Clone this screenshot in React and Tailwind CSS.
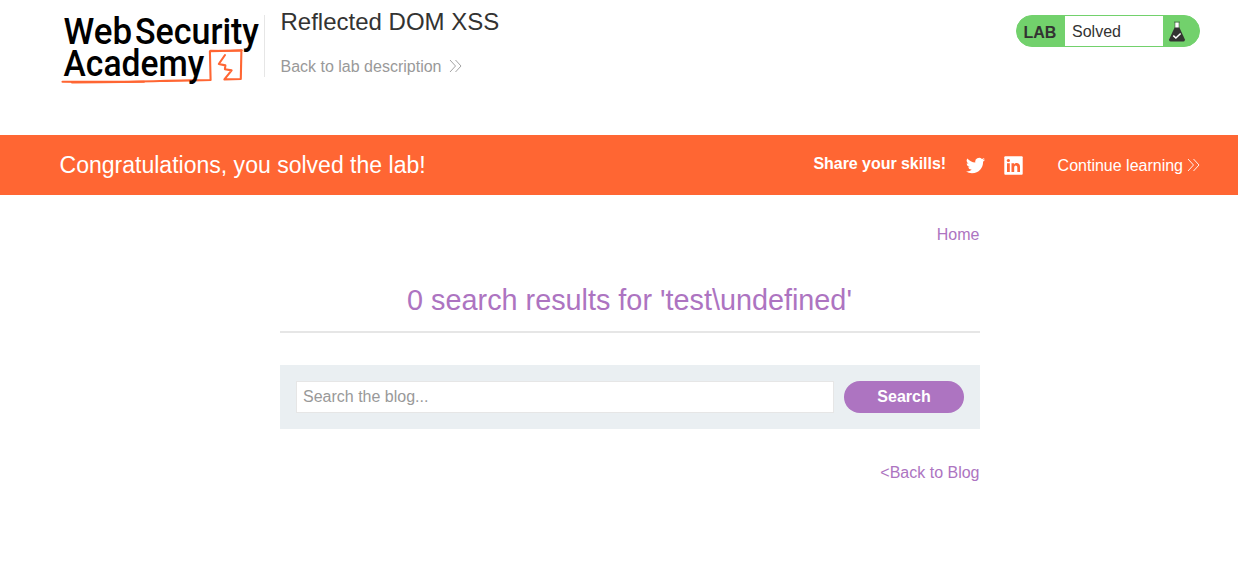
function Logo() {
  return (
    <svg width="204" height="90" viewBox="0 0 204 90" overflow="visible" className="block shrink-0" role="img" aria-label="Web Security Academy">
      <g fill="none" stroke="#ff6633" strokeLinecap="round" strokeLinejoin="round">
        <path d="M2.5 81.8 C30 81.9 70 82 100 81 C120 80.4 138 80.4 150.6 80 L149.9 51.2 L181.4 50.4 L180.8 79 L164.4 79.4 L171.6 70.4 L164.9 69.2 L165.4 65.4 L158.8 64 L165 55" strokeWidth="2.1" />
        <path d="M150.5 50.6 L170 50.9 L182 50.3" strokeWidth="1.6" />
        <path d="M12 82.4 C35 82.2 65 82 84 81.7" strokeWidth="2" />
      </g>
      <g fill="#000" fontFamily="Roboto, sans-serif" fontSize="37.5" fontWeight="500">
        <text x="3.6" y="43.5" textLength="68.6" lengthAdjust="spacingAndGlyphs">Web</text>
        <text x="75" y="43.5" textLength="124" lengthAdjust="spacingAndGlyphs">Security</text>
        <text x="3.6" y="76.2" textLength="140.5" lengthAdjust="spacingAndGlyphs">Academy</text>
      </g>
    </svg>
  );
}

function Chevrons({ className }) {
  return (
    <svg width="13" height="14" viewBox="0 0 13 14" fill="none" stroke="currentColor" strokeWidth="0.9" className={className} aria-hidden="true">
      <path d="M1 1 L6.5 7 L1 13 M6.5 1 L12 7 L6.5 13" />
    </svg>
  );
}

function Flask() {
  return (
    <svg width="18" height="22" viewBox="0 0 18 22" aria-hidden="true">
      <path d="M7 1.5 H11 V8 H7 Z" fill="#fff" />
      <path d="M6 1 H12 M7 1 V7 M11 1 V7" stroke="#333332" strokeWidth=".5" fill="none" />
      <path d="M6.6 6.5 H11.4 L16.8 18.2 Q17.3 20.5 15.5 20.5 H2.5 Q.7 20.5 1.2 18.2 Z" fill="#333332" />
      <path d="M5.3 14.6 L7.9 17 L12.6 12.5" stroke="#fff" strokeWidth="1.5" fill="none" />
    </svg>
  );
}

export default function App() {
  return (
    <div className="min-h-[586px] bg-white font-['Liberation_Sans',Arial,sans-serif] text-base text-[#333332]">
      <header className="flex h-[135px] items-start pr-[38px] pl-[60px]">
        <Logo />
        <div className="mt-[15px] h-[62px] w-px bg-[#e6e6e6]" />
        <div className="flex-1 pt-[7px] pl-[15.5px]">
          <h1 className="text-2xl leading-[30px]">Reflected DOM XSS</h1>
          <a className="mt-[19px] flex items-start leading-[22px] text-[#999]">
            Back to lab description
            <Chevrons className="mt-[3px] ml-2" />
          </a>
        </div>
        <div className="mt-[15px] flex h-8 w-[184px] items-center overflow-hidden rounded-full border border-[#72d16c] bg-[#72d16c]">
          <span className="w-12 pt-[3px] pl-[6.5px] font-bold">LAB</span>
          <span className="flex h-full w-[98px] items-center bg-white pt-0.5 pl-[7px]">Solved</span>
          <span className="pt-0.5 pl-[5px]"><Flask /></span>
        </div>
      </header>

      <section className="flex h-[60px] items-center bg-[#ff6633] pr-[38px] pl-[59.5px] text-white">
        <p className="flex-1 text-[23.04px]">Congratulations, you solved the lab!</p>
        <p className="mr-[19.5px] mb-0.5 font-bold tracking-[-0.04px]">Share your skills!</p>
        <svg width="19" height="19" viewBox="0 0 24 24" fill="currentColor" className="mr-[19px]" aria-label="Twitter">
          <path d="M23.95 4.57a10 10 0 0 1-2.82.77 4.96 4.96 0 0 0 2.16-2.72c-.95.55-2 .95-3.13 1.18a4.92 4.92 0 0 0-8.38 4.48C7.69 8.1 4.07 6.13 1.64 3.16a4.92 4.92 0 0 0 1.52 6.57 4.9 4.9 0 0 1-2.23-.61v.06a4.92 4.92 0 0 0 3.95 4.83 5 5 0 0 1-2.21.08 4.94 4.94 0 0 0 4.6 3.42A9.87 9.87 0 0 1 0 19.54a13.99 13.99 0 0 0 7.55 2.21c9.05 0 14-7.5 14-13.98 0-.21 0-.42-.02-.63a9.94 9.94 0 0 0 2.46-2.55z" />
        </svg>
        <svg width="19" height="19" viewBox="0 0 19 19" className="mr-[35px]" aria-label="LinkedIn">
          <rect x=".3" y=".3" width="18.4" height="18.4" rx="1" fill="#fff" />
          <g fill="#ff6633">
            <circle cx="4.4" cy="4.5" r="1.6" />
            <path d="M3 7.3 H5.8 V16 H3 Z M7.5 7.3 H10.1 V8.5 C11.7 6.2 16 6.6 16 10.8 V16 H13.3 V11.5 C13.3 8.6 10.2 8.8 10.2 11.5 V16 H7.5 Z" />
          </g>
        </svg>
        <a className="flex items-center"><span className="pt-0.5">Continue learning</span><Chevrons className="ml-1" /></a>
      </section>

      <main className="ml-[280px] w-[700px]">
        <nav className="flex justify-end pt-7 pr-[0.5px] leading-6 text-[#ad74c1]"><a>Home</a></nav>
        <h2 className="mt-[33px] h-[53px] border-b-2 border-[#e6e6e6] pr-px text-center text-[28.8px] leading-[40px] text-[#ad74c1]">
          0 search results for 'test\undefined'
        </h2>
        <form className="mt-8 flex h-16 items-center gap-[10px] bg-[#eaeff2] px-4">
          <input className="h-8 w-[538px] border border-[#e6e6e6] bg-white px-1.5 pb-px placeholder:text-[#999]" placeholder="Search the blog..." />
          <button type="button" className="h-8 w-[120px] rounded-full bg-[#ad74c1] pb-px font-bold text-white">Search</button>
        </form>
        <div className="flex justify-end pt-8 pr-[0.5px] leading-6 text-[#ad74c1]"><a>&lt;Back to Blog</a></div>
      </main>
    </div>
  );
}
